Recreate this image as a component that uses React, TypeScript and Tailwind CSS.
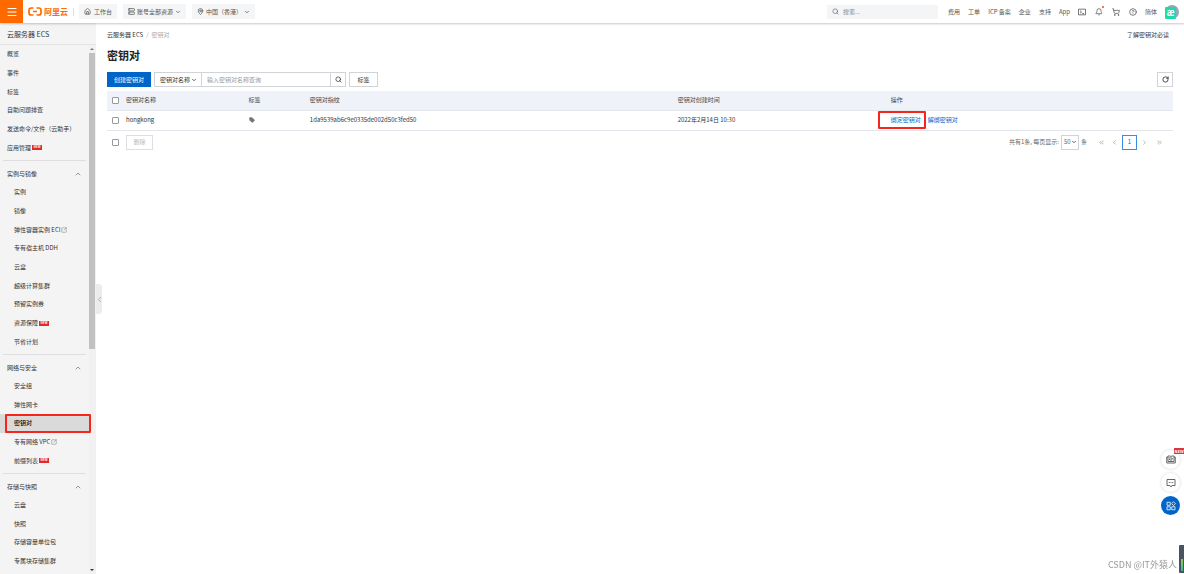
import React from "react";
import {
  Bell,
  ChevronDown,
  ChevronLeft,
  ChevronRight,
  ChevronUp,
  ChevronsLeft,
  ChevronsRight,
  CircleHelp,
  House,
  MapPin,
  Menu,
  RotateCw,
  Search,
  Server,
  ShoppingCart,
  SquareArrowOutUpRight,
  Tag,
} from "lucide-react";

type Item = { label: string; isNew?: boolean; external?: boolean; active?: boolean };

const topItems: Item[] = [
  { label: "概览" },
  { label: "事件" },
  { label: "标签" },
  { label: "自助问题排查" },
  { label: "发送命令/文件（云助手）" },
  { label: "应用管理", isNew: true },
];

const instanceItems: Item[] = [
  { label: "实例" },
  { label: "镜像" },
  { label: "弹性容器实例 ECI", external: true },
  { label: "专有宿主机 DDH" },
  { label: "云盒" },
  { label: "超级计算集群" },
  { label: "预留实例券" },
  { label: "资源保障", isNew: true },
  { label: "节省计划" },
];

const networkItems: Item[] = [
  { label: "安全组" },
  { label: "弹性网卡" },
  { label: "密钥对", active: true },
  { label: "专有网络 VPC", external: true },
  { label: "前缀列表", isNew: true },
];

const storageItems: Item[] = [
  { label: "云盘" },
  { label: "快照" },
  { label: "存储容量单位包" },
  { label: "专属块存储集群" },
];

function NewBadge() {
  return (
    <span className="flex h-[5px] w-[10px] items-center justify-center bg-[#e02b2b] text-[3px] font-bold leading-none text-white">
      NEW
    </span>
  );
}

function NavList({ items, nested, height }: { items: Item[]; nested?: boolean; height: string }) {
  return (
    <ul className={`flex flex-col ${height}`}>
      {items.map((item) => (
        <li key={item.label} className={`relative flex flex-1 ${item.active ? "bg-[#dadada]" : ""}`}>
          <a
            href="#"
            className={`flex flex-1 items-center gap-px whitespace-nowrap ${nested ? "pl-[14px]" : "pl-[7px]"} ${item.active ? "font-medium text-black" : ""}`}
          >
            {item.label}
            {item.isNew && <NewBadge />}
            {item.external && <SquareArrowOutUpRight className="size-[6px] text-[#777]" />}
          </a>
          {item.active && (
            <span className="pointer-events-none absolute inset-y-0 left-[5px] -right-[2px] z-10 rounded-[1px] border-2 border-[#f5261b]" />
          )}
        </li>
      ))}
    </ul>
  );
}

function NavGroup({ title, items, height }: { title: string; items: Item[]; height: string }) {
  return (
    <section>
      <div className="mx-[3px] mt-[3px] border-t border-[#dedede]" />
      <button type="button" className="flex h-[22px] w-full items-center justify-between pt-[4px] pr-[7px] pl-[7px]">
        {title}
        <ChevronUp className="size-[8px] text-[#666]" />
      </button>
      <NavList items={items} nested height={height} />
    </section>
  );
}

function Brand() {
  return (
    <a href="#" className="flex items-center gap-[2px] pl-[5px] text-[#ff6a00]">
      <svg viewBox="0 0 28 18" className="h-[9px] w-[14px]" fill="none" stroke="currentColor" strokeWidth="3.4" aria-hidden="true">
        <path d="M11 2H6.5C4 2 2 3.6 2 6v6c0 2.4 2 4 4.500 4H11M17 2h4.500C24 2 26 3.600 26 6v6c0 2.400-2 4-4.500 4H17M10 9h8" />
      </svg>
      <span className="text-[8px] font-bold leading-none">阿里云</span>
    </a>
  );
}

function TerminalIcon() {
  return (
    <svg viewBox="0 0 24 24" className="size-[8px] text-[#444]" fill="none" stroke="currentColor" strokeWidth="2.2" aria-hidden="true">
      <path d="M1.500 3.500h21v17h-21zM6 8l4.500 4L6 16M12.500 16.500H18" />
    </svg>
  );
}

function Avatar() {
  return (
    <button
      type="button"
      aria-label="账号"
      className="flex size-[14px] items-end rounded-full bg-[#8fa9b5]"
    >
      <span className="flex h-[12px] w-[11px] items-center justify-center rounded-[1px] bg-gradient-to-r from-[#1fe08f] to-[#22d3c5] text-[9px] font-bold leading-none text-white">
        æ
      </span>
    </button>
  );
}

function Header() {
  const pill = "flex h-[15px] items-center bg-[#f4f5f6] px-[5px] whitespace-nowrap";
  const icon = "size-[8px] text-[#444]";
  return (
    <header className="relative z-20 flex h-[23px] shrink-0 items-center bg-white text-[#555] shadow-[0_1px_2px_rgba(0,0,0,0.22)]">
      <button type="button" aria-label="菜单" className="flex size-[23px] items-center justify-center bg-[#ff6a00] text-white">
        <Menu className="size-[12px]" strokeWidth={2} />
      </button>
      <Brand />
      <div className="mx-[5px] h-[8px] border-l border-[#ddd]" />
      <div className="flex gap-[6px]">
        <button type="button" className={`${pill} gap-[3px]`}>
          <House className="size-[7px]" strokeWidth={2.5} />
          工作台
        </button>
        <button type="button" className={`${pill} gap-[2px]`}>
          <Server className="size-[7px]" strokeWidth={2.5} />
          账号全部资源
          <ChevronDown className="size-[6px]" strokeWidth={3} />
        </button>
        <button type="button" className={`${pill} gap-[2px]`}>
          <MapPin className="size-[7px]" strokeWidth={2.5} />
          中国（香港）
          <ChevronDown className="size-[6px]" strokeWidth={3} />
        </button>
      </div>
      <label className="ml-auto flex h-[14px] w-[111px] items-center gap-[4px] bg-[#f4f5f6] px-[5px]">
        <Search className="size-[7px] shrink-0" />
        <input aria-label="搜索" placeholder="搜索..." className="w-full min-w-0 bg-transparent outline-none placeholder:text-[#888]" />
      </label>
      <nav className="flex items-center gap-[8px] pr-[5px] pl-[10px] whitespace-nowrap">
        <a href="#">费用</a>
        <a href="#">工单</a>
        <a href="#">ICP 备案</a>
        <a href="#">企业</a>
        <a href="#">支持</a>
        <a href="#">App</a>
        <div className="flex items-center gap-[9px]">
          <button type="button" aria-label="终端"><TerminalIcon /></button>
          <button type="button" aria-label="通知" className="relative">
            <Bell className={icon} />
            <span className="absolute -top-[2px] -right-[1px] size-[2px] rounded-full bg-[#ff4a00]" />
          </button>
          <button type="button" aria-label="购物车"><ShoppingCart className={icon} /></button>
          <button type="button" aria-label="帮助"><CircleHelp className={icon} /></button>
        </div>
        <a href="#">简体</a>
        <Avatar />
      </nav>
    </header>
  );
}

function Sidebar() {
  return (
    <aside className="relative flex w-[96px] shrink-0 flex-col bg-[#f4f4f4] text-[#333]">
      <h2 className="flex h-[22px] shrink-0 items-center border-b border-[#e3e3e3] pl-[7px] text-[7px]">云服务器 ECS</h2>
      <div className="flex min-h-0 flex-1">
        <nav className="min-w-0 flex-1">
          <NavList items={topItems} height="h-[112px]" />
          <NavGroup title="实例与镜像" items={instanceItems} height="h-[168px]" />
          <NavGroup title="网络与安全" items={networkItems} height="h-[93px]" />
          <NavGroup title="存储与快照" items={storageItems} height="h-[74px]" />
        </nav>
        <div className="flex w-[7px] flex-col items-start bg-[#f1f1f1]" aria-hidden="true">
          <svg viewBox="0 0 6 6" className="my-px size-[6px]"><path d="M1 4l2-2 2 2z" fill="#777" /></svg>
          <div className="w-[6px] flex-[295] bg-[#c1c1c1]" />
          <div className="flex-[217]" />
          <svg viewBox="0 0 6 6" className="my-px size-[6px]"><path d="M1 2l2 2 2-2z" fill="#333" /></svg>
        </div>
      </div>
      <button type="button" aria-label="收起" className="absolute top-[261px] left-full flex h-[30px] w-[6px] items-center justify-center rounded-r-[3px] bg-[#ececec] text-[#999]">
        <ChevronLeft className="size-[9px] shrink-0" />
      </button>
    </aside>
  );
}

function Box({ label }: { label: string }) {
  return (
    <input
      type="checkbox"
      aria-label={label}
      className="block size-[7px] appearance-none rounded-[1px] border border-[#999] bg-white"
    />
  );
}

function Toolbar() {
  return (
    <div className="mt-[9px] flex h-[15px] items-stretch">
      <button type="button" className="w-[44px] bg-[#0064c8] text-white">创建密钥对</button>
      <div className="relative ml-[3px] flex w-[48px] items-center border border-[#d0d3d8]">
        <select aria-label="查询字段" className="h-full w-full appearance-none bg-transparent pl-[5px] outline-none">
          <option>密钥对名称</option>
        </select>
        <ChevronDown className="pointer-events-none absolute right-[4px] size-[6px]" strokeWidth={3} />
      </div>
      <input
        aria-label="密钥对名称查询"
        placeholder="输入密钥对名称查询"
        className="w-[128px] border-y border-[#d0d3d8] px-[5px] outline-none placeholder:text-[#999]"
      />
      <button type="button" aria-label="查询" className="flex w-[16px] items-center justify-center border border-[#d0d3d8]">
        <Search className="size-[7px]" strokeWidth={2.5} />
      </button>
      <button type="button" className="ml-[3px] w-[29px] border border-[#d0d3d8]">标签</button>
      <button type="button" aria-label="刷新" className="ml-auto flex w-[16px] items-center justify-center border border-[#d0d3d8]">
        <RotateCw className="size-[7px]" strokeWidth={3} />
      </button>
    </div>
  );
}

function KeyTable() {
  return (
    <table className="mt-[4px] w-full table-fixed border-collapse text-left">
      <colgroup>
        <col className="w-[19px]" />
        <col className="w-[11.5%]" />
        <col className="w-[5.75%]" />
        <col className="w-[34.5%]" />
        <col className="w-[20%]" />
        <col />
      </colgroup>
      <thead>
        <tr className="h-[19px] border-b border-[#e3e6ea] bg-[#eff2f8] text-[#444]">
          <th className="pl-[5px]"><Box label="全选" /></th>
          <th className="font-normal">密钥对名称</th>
          <th className="font-normal">标签</th>
          <th className="font-normal">密钥对指纹</th>
          <th className="font-normal">密钥对创建时间</th>
          <th className="font-normal">操作</th>
        </tr>
      </thead>
      <tbody>
        <tr className="h-[20px] border-b border-[#e3e6ea]">
          <td className="pl-[5px]"><Box label="hongkong" /></td>
          <td>hongkong</td>
          <td><Tag className="size-[6px] fill-[#777] text-[#777]" /></td>
          <td>1da9539ab6c9e0335de002d50c3fed50</td>
          <td>2022年2月14日 10:30</td>
          <td>
            <div className="flex items-center gap-[3px] text-[#0064c8]">
              <span className="relative">
                <a href="#">绑定密钥对</a>
                <span className="pointer-events-none absolute -inset-y-[5px] -left-[13px] -right-[5px] rounded-[1px] border-2 border-[#f5261b]" />
              </span>
              <span className="h-[5px] border-l border-[#ddd]" />
              <a href="#">解绑密钥对</a>
            </div>
          </td>
        </tr>
      </tbody>
    </table>
  );
}

function Footer() {
  return (
    <div className="mt-[4px] flex h-[15px] items-center text-[#666]">
      <div className="w-[19px] shrink-0 pl-[5px]"><Box label="选择当前页" /></div>
      <button type="button" disabled className="h-[15px] w-[27px] border border-[#dcdee3] text-[#bbb]">删除</button>
      <div className="ml-auto flex items-center gap-[2px] pr-[10px]">
        <label htmlFor="page-size">共有1条, 每页显示:</label>
        <div className="relative flex h-[15px] w-[18px] items-center border border-[#d0d3d8]">
          <select id="page-size" className="h-full w-full appearance-none bg-transparent pl-[2px] outline-none">
            <option>50</option>
          </select>
          <ChevronDown className="pointer-events-none absolute right-px size-[6px]" strokeWidth={4} />
        </div>
        <span>条</span>
        <nav aria-label="分页" className="ml-[9px] flex items-center gap-[4px] text-[#888]">
          <div className="flex items-center gap-[6px]">
            <button type="button" aria-label="首页"><ChevronsLeft className="size-[7px]" /></button>
            <button type="button" aria-label="上一页"><ChevronLeft className="size-[7px]" /></button>
          </div>
          <button type="button" className="h-[15px] w-[15px] border border-[#3b8be0] text-[#0064c8]">1</button>
          <div className="flex items-center gap-[8px]">
            <button type="button" aria-label="下一页"><ChevronRight className="size-[7px]" /></button>
            <button type="button" aria-label="末页"><ChevronsRight className="size-[7px]" /></button>
          </div>
        </nav>
      </div>
    </div>
  );
}

function FloatingTools() {
  const round = "relative flex size-[19px] items-center justify-center rounded-full";
  return (
    <div className="fixed right-[4px] bottom-[59px] z-30 flex flex-col gap-[4px]">
      <button type="button" aria-label="文档" className={`${round} bg-white text-[#666] shadow-[0_0_3px_rgba(0,0,0,0.18)]`}>
        <svg viewBox="0 0 20 18" className="h-[9px] w-[10px]" fill="none" stroke="currentColor" strokeWidth="2" aria-hidden="true">
          <path d="M4 4H1.500v12h17V4H16M4 2h5l1 1 1-1h5v11H4zM10 3v10M12.500 6v3M6 6h2M6 9h2" />
        </svg>
        <span className="absolute -top-[2px] -right-[4px] flex h-[6px] w-[10px] items-center justify-center bg-[#e0353a] text-[4px] font-bold leading-none text-white">NEW</span>
      </button>
      <button type="button" aria-label="咨询" className={`${round} bg-white text-[#666] shadow-[0_0_3px_rgba(0,0,0,0.18)]`}>
        <svg viewBox="0 0 20 20" className="size-[10px]" fill="none" stroke="currentColor" strokeWidth="2" aria-hidden="true">
          <path d="M2 3h16v12h-6l-2 3-2-3H2zM5.500 9h2M9 9h2M12.500 9h2" />
        </svg>
      </button>
      <button type="button" aria-label="应用" className={`${round} bg-[#0064c8] text-white`}>
        <svg viewBox="0 0 20 20" className="size-[10px]" fill="none" stroke="currentColor" strokeWidth="1.600" aria-hidden="true">
          <path d="M2 2.500h6.500v6H2zM2 11.500h6.500v6H2zM11.500 11.500H18v6h-6.500zM15 1.500l3.800 3.800L15 9.100l-3.800-3.800z" />
        </svg>
      </button>
    </div>
  );
}

export default function App() {
  return (
    <div className="flex h-screen flex-col overflow-hidden bg-white font-['Noto_Sans_CJK_SC','Noto_Sans',sans-serif] text-[6px] leading-[8px] text-[#333]">
      <Header />
      <div className="flex min-h-0 flex-1">
        <Sidebar />
        <main className="min-w-0 flex-1 pt-[8px] pr-[11px] pl-[11px]">
          <div className="flex justify-between pr-[4px]">
            <nav aria-label="面包屑" className="flex gap-[3px]">
              <a href="#">云服务器 ECS</a>
              <span className="text-[#aaa]">/</span>
              <span className="text-[#aaa]">密钥对</span>
            </nav>
            <a href="#">了解密钥对必读</a>
          </div>
          <h1 className="mt-[8px] text-[11px] font-bold leading-[16px] text-[#222]">密钥对</h1>
          <Toolbar />
          <KeyTable />
          <Footer />
        </main>
      </div>
      <FloatingTools />
      <div className="fixed right-[7px] bottom-[3px] text-[9px] leading-[12px] text-[#999]">CSDN @IT外猿人</div>
      <div className="fixed right-0 bottom-px flex h-[28px] w-[5px] items-end justify-center rounded-l-[1px] bg-[#4a5360] pb-[2px]" aria-hidden="true">
        <div className="h-[12px] w-[2px] bg-gradient-to-b from-[#9ac94a] to-[#2bb59a]" />
      </div>
    </div>
  );
}
